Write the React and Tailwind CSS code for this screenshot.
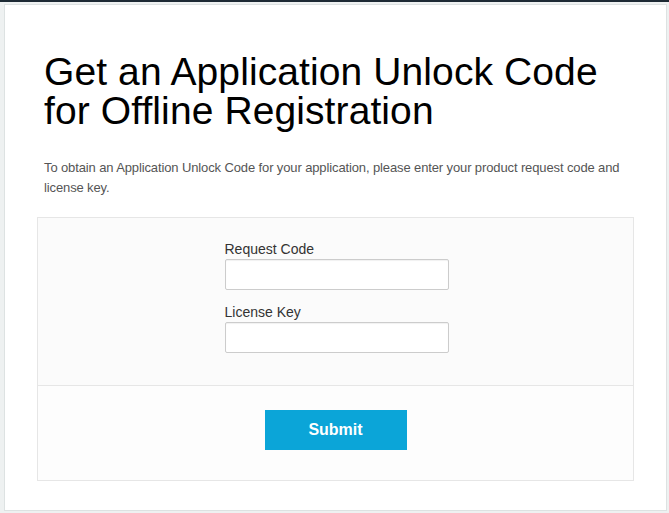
import React from "react";

const Field = ({ label, className = "" }) => (
  <div className={`flex flex-col ${className}`}>
    <label className="text-[14px] leading-[20px] text-[#333]">{label}</label>
    <input
      type="text"
      className="h-[31px] w-full rounded-[2px] border border-[#cccccc] bg-white px-2 text-[14px] shadow-[inset_0_1px_1px_rgba(0,0,0,0.06)] focus:outline-none"
    />
  </div>
);

export default function App() {
  return (
    <div className="h-[513px] w-[669px] overflow-hidden border-t-2 border-[#1d2a34] bg-[#eef1f1] pl-1 pr-[2px] pt-[2px] font-['Liberation_Sans',Arial,sans-serif]">
      <div className="h-[507px] border border-[#dde2e2] bg-white px-[32px] pt-[47px]">
        {/* Title */}
        <div className="px-[7px]">
          <h1 className="text-[39px] font-normal leading-[39px] tracking-[0.1px] text-black">
            Get an Application Unlock Code
            <br />
            for Offline Registration
          </h1>
          <p className="mt-[28px] text-[13px] leading-[20px] tracking-[-0.12px] text-[#555]">
            To obtain an Application Unlock Code for your application, please
            enter your product request code and license key.
          </p>
        </div>

        {/* Form box */}
        <div className="mt-[19px] border border-[#e6e6e6]">
          <div className="flex justify-center bg-[#fbfbfb] pb-[32px] pt-[21px]">
            <div className="ml-[2px] w-[224px]">
              <Field label="Request Code" />
              <Field label="License Key" className="mt-[12px]" />
            </div>
          </div>
          <div className="flex justify-center border-t border-[#e6e6e6] bg-[#fdfdfd] pb-[30px] pt-[24px]">
            <button className="h-[40px] w-[142px] bg-[#0ba5d8] text-[16px] font-bold text-white">
              Submit
            </button>
          </div>
        </div>
      </div>
    </div>
  );
}
